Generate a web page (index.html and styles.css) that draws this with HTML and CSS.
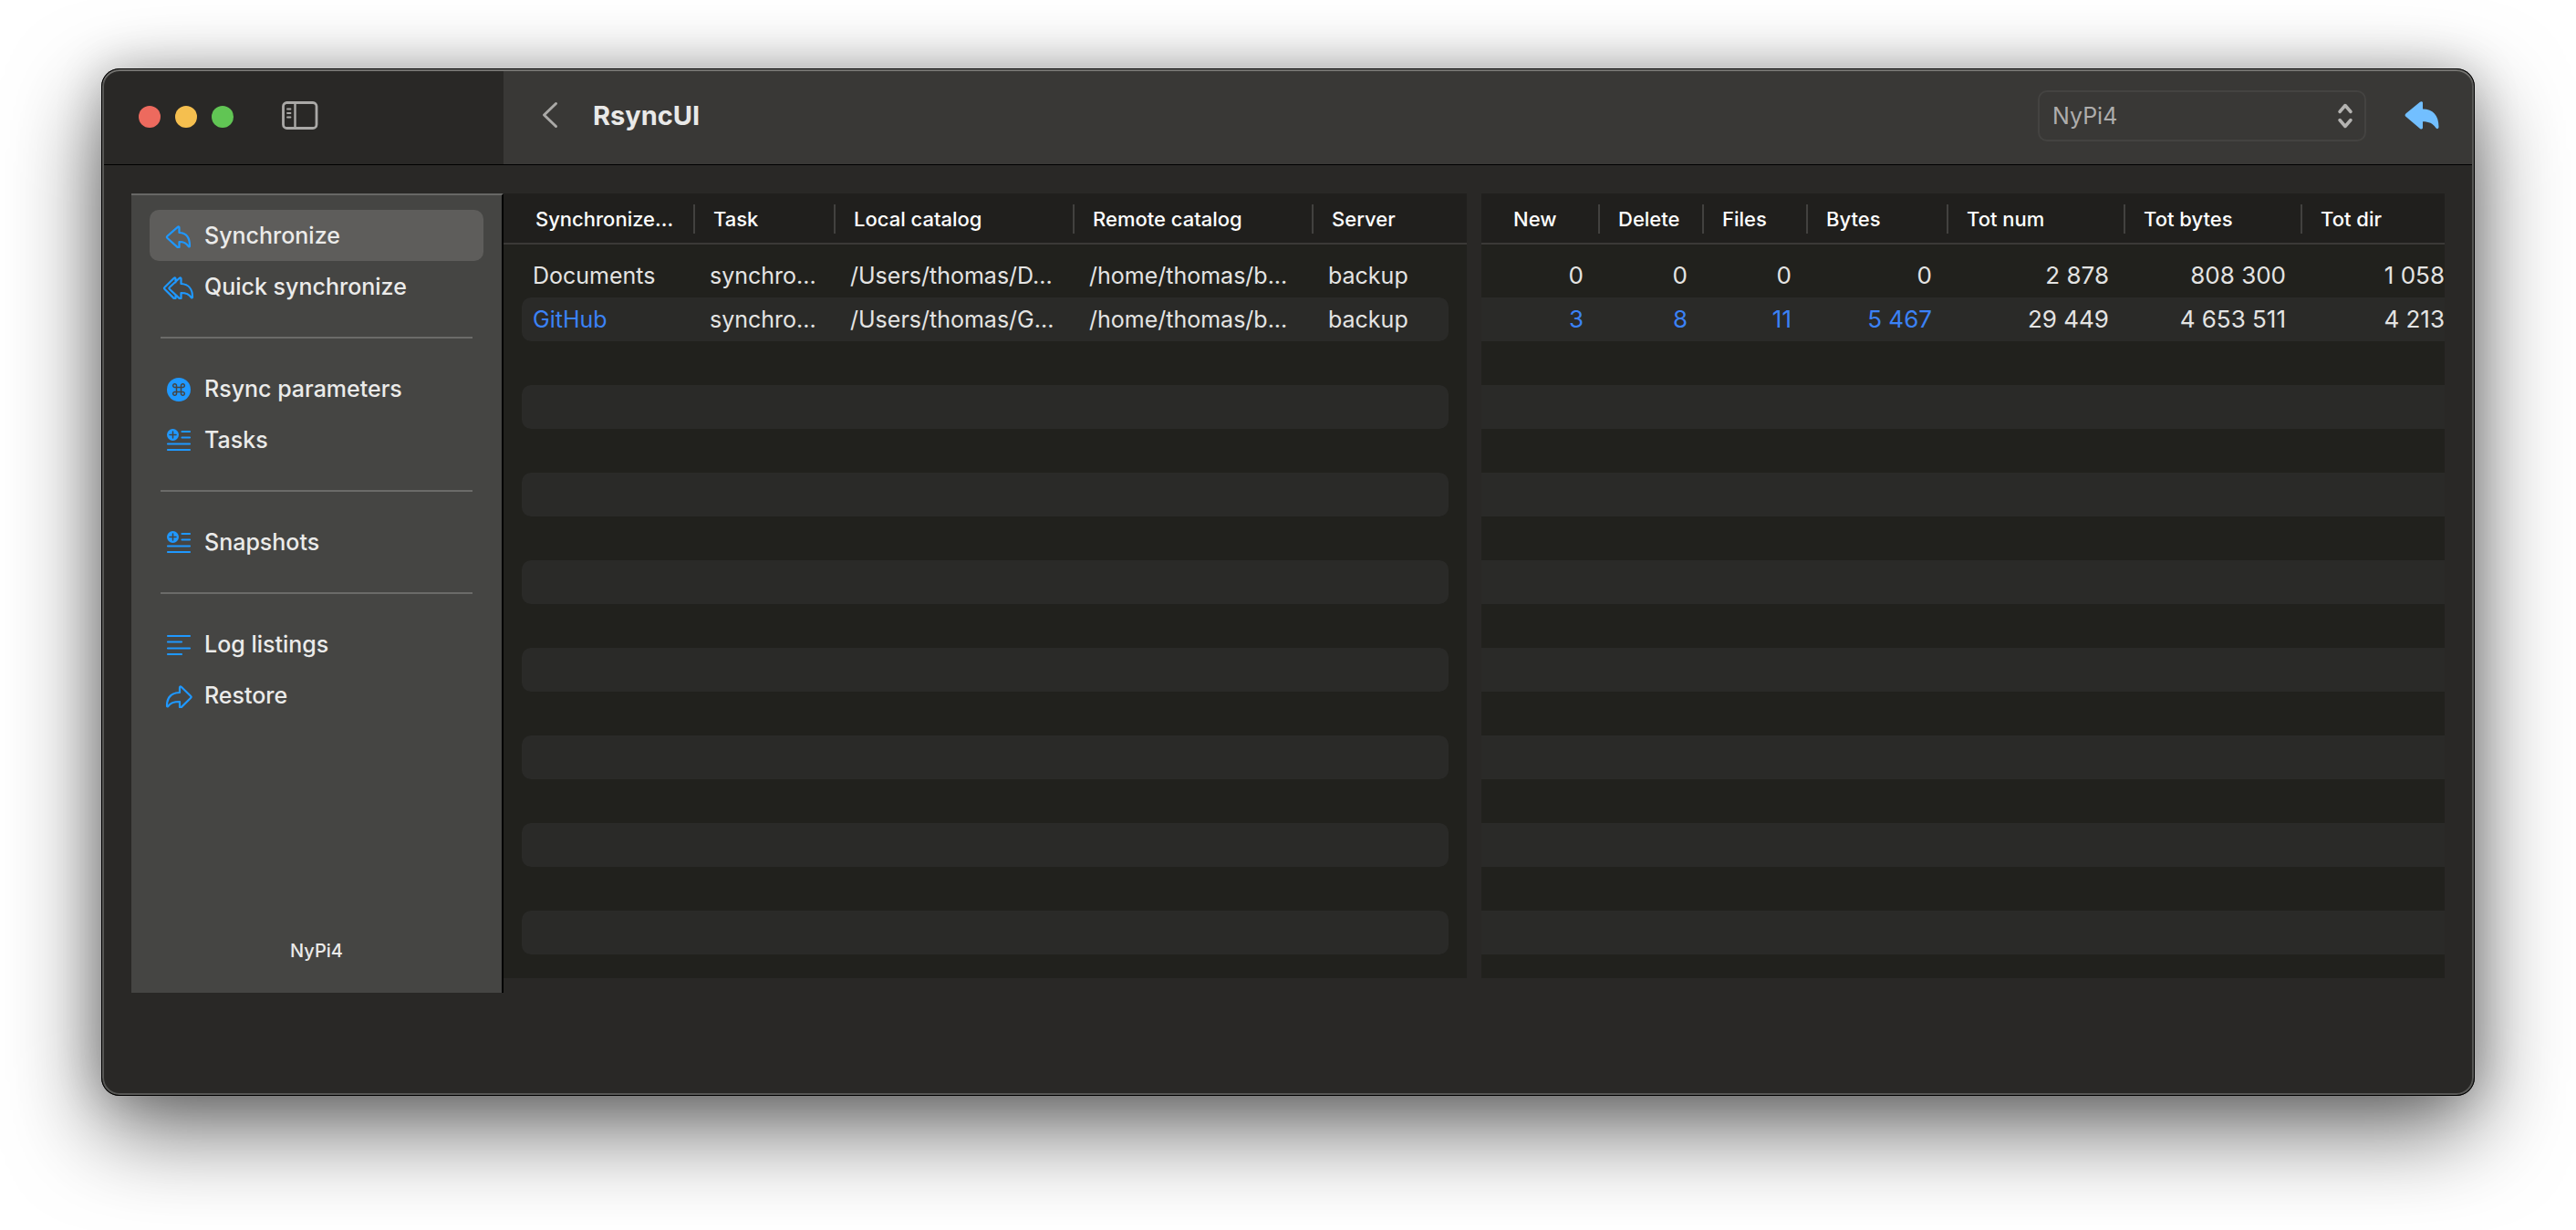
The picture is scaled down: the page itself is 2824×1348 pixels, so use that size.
FILE: index.html
```html
<!DOCTYPE html>
<html lang="en">
<head>
<meta charset="utf-8">
<meta name="viewport" content="width=device-width, initial-scale=1">
<title>RsyncUI</title>
<link rel="stylesheet" href="styles.css">
</head>
<body>
<svg class="defs" aria-hidden="true">
  <symbol id="reply" viewBox="-1 -2 36 28">
    <path d="M17.500 3.500v5.500c8.500.3 11.500 6.500 11.500 14.500 0 1.200-1 1.300-1.600.3C25.300 20.300 22.500 19 17.500 19v5.400c0 1.200-.8 1.500-1.700.7L4.500 15c-.9-.8-.9-1.500 0-2.300L15.800 2.800c.9-.8 1.700-.5 1.700.7z"/>
  </symbol>
  <symbol id="reply-all" viewBox="0 -2 36 28">
    <path d="M14.500 7.500V3.500c0-1.200-.8-1.500-1.700-.7L2.600 12.700c-.9.800-.9 1.500 0 2.300l10.200 10.100c.9.800 1.700.5 1.700-.7v-2.500M20.500 3.500v5.500c8.500.3 12.500 6.500 12.500 14.500 0 1.200-1 1.300-1.600.3C29.300 20.300 25.500 19 20.500 19v5.400c0 1.200-.8 1.500-1.700.7L8 15c-.9-.8-.9-1.500 0-2.300L18.800 2.800c.9-.8 1.700-.5 1.700.7z"/>
  </symbol>
  <symbol id="list-plus" viewBox="0 0 28 28">
    <circle cx="7.500" cy="8.500" r="6.500" fill="currentColor" stroke="none"/>
    <path d="M7.500 5v7M4 8.500h7" stroke="#454543" stroke-width="1.500"/>
    <path d="M17.500 5H26M17.500 11.500H26M2 18.500h24M2 25h24"/>
  </symbol>
</svg>

<div class="window">
  <header class="titlebar">
    <div class="titlebar-side">
      <div class="lights">
        <button class="light close" aria-label="Close"></button>
        <button class="light minimize" aria-label="Minimize"></button>
        <button class="light zoom" aria-label="Zoom"></button>
      </div>
      <button class="icon-button" aria-label="Toggle sidebar">
        <svg width="40" height="32" viewBox="0 0 40 32" fill="none" stroke="currentColor" stroke-width="2.800" stroke-linecap="round">
          <rect x="1.500" y="1.500" width="36.500" height="28" rx="4"/>
          <path d="M14.500 2v27" stroke-width="2.400"/>
          <path d="M6 8.500h3.500M6 13h3.500M6 17.500h3.500" stroke-width="1.800"/>
        </svg>
      </button>
    </div>
    <div class="toolbar">
      <button class="icon-button" aria-label="Back">
        <svg width="18" height="30" viewBox="0 0 18 30" fill="none" stroke="currentColor" stroke-width="3" stroke-linecap="round" stroke-linejoin="round"><path d="M15.500 2.500 2.500 15l13 12.500"/></svg>
      </button>
      <h1 class="title">RsyncUI</h1>
      <div class="picker">
        <select class="picker-select" aria-label="Profile"><option>NyPi4</option></select>
        <svg class="picker-arrows" width="18" height="28" viewBox="0 0 18 28" fill="none" stroke="currentColor" stroke-width="3.500" stroke-linecap="round" stroke-linejoin="round"><path d="m3 9.500 6-7 6 7M3 18.500l6 7 6-7"/></svg>
      </div>
      <button class="icon-button send" aria-label="Return">
        <svg width="38" height="32" viewBox="0 0 38 32" fill="currentColor"><path d="M20 2.600v6.900C31 9.700 37.500 16 37.500 29c0 2.200-2 3-3.300 1C31 25 27 23.300 20 23.200v6.900c0 1.500-1.700 2-3 .8L1.700 18c-1.500-1.200-1.500-2.400 0-3.700L17 1.800c1.300-1.200 3-.7 3 .8z"/></svg>
      </button>
    </div>
  </header>

  <main class="content">
    <nav class="sidebar" aria-label="Sections">
      <ul class="menu">
        <li><a class="item selected" href="#synchronize" aria-current="page"><svg class="glyph"><use href="#reply"/></svg>Synchronize</a></li>
        <li><a class="item" href="#quick"><svg class="glyph"><use href="#reply-all"/></svg>Quick synchronize</a></li>
      </ul>
      <hr class="divider">
      <ul class="menu">
        <li><a class="item" href="#parameters"><svg class="glyph" viewBox="0 0 28 28"><circle cx="14" cy="15" r="13" fill="currentColor" stroke="none"/><path d="M11.500 12.500h5v5h-5zM11.500 12.500H9.700a1.900 1.900 0 1 1 1.800-1.900zM16.500 12.500h1.800a1.900 1.900 0 1 0-1.800-1.900zM11.500 17.500H9.700a1.900 1.900 0 1 0 1.800 1.900zM16.500 17.500h1.800a1.900 1.900 0 1 1-1.800 1.900z" stroke="#454543" stroke-width="1.500"/></svg>Rsync parameters</a></li>
        <li><a class="item" href="#tasks"><svg class="glyph"><use href="#list-plus"/></svg>Tasks</a></li>
      </ul>
      <hr class="divider">
      <ul class="menu">
        <li><a class="item" href="#snapshots"><svg class="glyph"><use href="#list-plus"/></svg>Snapshots</a></li>
      </ul>
      <hr class="divider">
      <ul class="menu">
        <li><a class="item" href="#logs"><svg class="glyph" viewBox="0 0 28 28"><path d="M2 5h24M2 11.500h15M2 18.500h24M2 25h15"/></svg>Log listings</a></li>
        <li><a class="item" href="#restore"><svg class="glyph" viewBox="1 -2 36 28"><path d="M20 3.500v5.500C10 9.300 6 15.500 6 23.500c0 1.200 1 1.300 1.600.3C9.700 20.300 14 19 20 19v5.400c0 1.200.8 1.500 1.700.7L32 15c.9-.8.9-1.500 0-2.300L21.700 2.800c-.9-.8-1.700-.5-1.700.7z"/></svg>Restore</a></li>
      </ul>
      <p class="profile">NyPi4</p>
    </nav>

    <div class="panels">
      <section class="panel" aria-label="Tasks">
        <table class="grid rounded">
          <colgroup><col class="w210"><col class="w154"><col class="w262"><col class="w262"><col></colgroup>
          <thead><tr><th>Synchronize...</th><th>Task</th><th>Local catalog</th><th>Remote catalog</th><th>Server</th></tr></thead>
          <tbody>
            <tr><td>Documents</td><td>synchro...</td><td>/Users/thomas/D...</td><td>/home/thomas/b...</td><td>backup</td></tr>
            <tr><td class="changed">GitHub</td><td>synchro...</td><td>/Users/thomas/G...</td><td>/home/thomas/b...</td><td>backup</td></tr>
            <tr><td colspan="5"></td></tr>
            <tr><td colspan="5"></td></tr>
            <tr><td colspan="5"></td></tr>
            <tr><td colspan="5"></td></tr>
            <tr><td colspan="5"></td></tr>
            <tr><td colspan="5"></td></tr>
            <tr><td colspan="5"></td></tr>
            <tr><td colspan="5"></td></tr>
            <tr><td colspan="5"></td></tr>
            <tr><td colspan="5"></td></tr>
            <tr><td colspan="5"></td></tr>
            <tr><td colspan="5"></td></tr>
            <tr><td colspan="5"></td></tr>
            <tr><td colspan="5"></td></tr>
          </tbody>
        </table>
      </section>

      <section class="panel" aria-label="Estimates">
        <table class="grid numeric">
          <colgroup><col class="w130"><col class="w114"><col class="w114"><col class="w154"><col class="w194"><col class="w194"><col></colgroup>
          <thead><tr><th>New</th><th>Delete</th><th>Files</th><th>Bytes</th><th>Tot num</th><th>Tot bytes</th><th>Tot dir</th></tr></thead>
          <tbody>
            <tr><td>0</td><td>0</td><td>0</td><td>0</td><td>2 878</td><td>808 300</td><td>1 058</td></tr>
            <tr><td class="changed">3</td><td class="changed">8</td><td class="changed">11</td><td class="changed">5 467</td><td>29 449</td><td>4 653 511</td><td>4 213</td></tr>
            <tr><td colspan="7"></td></tr>
            <tr><td colspan="7"></td></tr>
            <tr><td colspan="7"></td></tr>
            <tr><td colspan="7"></td></tr>
            <tr><td colspan="7"></td></tr>
            <tr><td colspan="7"></td></tr>
            <tr><td colspan="7"></td></tr>
            <tr><td colspan="7"></td></tr>
            <tr><td colspan="7"></td></tr>
            <tr><td colspan="7"></td></tr>
            <tr><td colspan="7"></td></tr>
            <tr><td colspan="7"></td></tr>
            <tr><td colspan="7"></td></tr>
            <tr><td colspan="7"></td></tr>
          </tbody>
        </table>
      </section>
    </div>
  </main>
</div>
</body>
</html>
```
FILE: styles.css
```css
* { box-sizing: border-box; }

body {
  margin: 0;
  padding: 75px 111px 147px;
  background: #fff;
  color: #e4e4e3;
  font: 25px/32px Inter, "Liberation Sans", sans-serif;
}

.defs { display: none; }

.window {
  position: relative;
  padding: 1px;
  border-radius: 20px;
  background: #292826;
  box-shadow: 0 36px 100px rgba(0, 0, 0, .6), 0 0 50px rgba(0, 0, 0, .2);
}

/* hairline and inner highlight around the window */
.window::after {
  content: "";
  position: absolute;
  inset: 0;
  border: 1px solid #000;
  border-radius: 20px;
  box-shadow: inset 0 2px 0 #73726f, inset 0 0 0 2px #575755;
  pointer-events: none;
}

.titlebar {
  display: grid;
  grid-template-columns: 440px 1fr;
  height: 105px;
  border-bottom: 1px solid #000;
}

.titlebar-side {
  display: flex;
  align-items: center;
  gap: 53px;
  padding-left: 40px;
}

.lights { display: flex; gap: 16px; }

.light {
  width: 24px;
  height: 24px;
  padding: 0;
  border: 0;
  border-radius: 50%;
}

.close { background: #ed6a5e; }
.minimize { background: #f5bf4f; }
.zoom { background: #61c554; }

.icon-button {
  display: flex;
  padding: 0 0 2px;
  border: 0;
  background: none;
  color: #aaa9a7;
}

.toolbar {
  display: flex;
  align-items: center;
  padding: 0 38px 2px 42px;
  border-top-right-radius: 19px;
  background: #393836;
}

.title {
  margin: 0 auto 0 38px;
  color: #e9e9e8;
  font-size: 29px;
  font-weight: 700;
}

.picker { display: grid; width: 360px; align-items: center; }

.picker-select {
  grid-area: 1 / 1;
  height: 56px;
  padding: 0 14px;
  border: 2px solid #444341;
  border-radius: 10px;
  appearance: none;
  background: none;
  color: #aeadac;
  font: inherit;
}

.picker-arrows {
  grid-area: 1 / 1;
  justify-self: end;
  margin-right: 14px;
  color: #b4b3b1;
  pointer-events: none;
}

.send { margin-left: 42px; color: #72bfff; }

.content {
  display: grid;
  grid-template-columns: 408px 1fr;
  padding: 31px 32px 112px;
}

.sidebar {
  display: flex;
  flex-direction: column;
  padding: 16px 20px 30px;
  border-top: 2px solid #676765;
  border-right: 2px solid #000;
  background: #454543;
}

.menu { margin: 0; padding: 0; list-style: none; }

.item {
  display: flex;
  align-items: center;
  gap: 10px;
  height: 56px;
  padding-left: 14px;
  border-radius: 10px;
  color: #ebebea;
  font-weight: 500;
  text-decoration: none;
}

.selected { background: #5e5d5b; }

.glyph {
  width: 36px;
  height: 28px;
  color: #1f98ff;
  fill: none;
  stroke: currentColor;
  stroke-width: 2.2;
  stroke-linecap: round;
  stroke-linejoin: round;
}

.divider {
  width: calc(100% - 24px);
  height: 2px;
  margin: 27px auto;
  border: 0;
  background: #6b6b69;
}

.profile {
  margin: auto 0 0;
  font-size: 20px;
  font-weight: 500;
  text-align: center;
  color: #ebebea;
}

.panels {
  display: grid;
  grid-template-columns: 1fr 1fr;
  gap: 16px;
  padding-bottom: 16px;
}

.panel {
  min-width: 0;
  padding-bottom: 26px;
  overflow: hidden;
  background: #21211d;
}

.grid {
  width: 100%;
  border-collapse: separate;
  border-spacing: 0;
  table-layout: fixed;
}

.w114 { width: 114px; }
.w130 { width: 130px; }
.w154 { width: 154px; }
.w194 { width: 194px; }
.w210 { width: 210px; }
.w262 { width: 262px; }

.grid th {
  height: 56px;
  padding: 2px 0 0 20px;
  border-bottom: 2px solid #3b3937;
  background: #201f1d linear-gradient(#42413f, #42413f) no-repeat right 0 top 12px / 2px 32px;
  color: #fff;
  font-size: 22px;
  font-weight: 500;
  text-align: left;
  white-space: nowrap;
}

.grid th:first-child { padding-left: 35px; }
.grid th:last-child { background-image: none; }

.grid tbody::before {
  content: "";
  display: table-row;
  height: 10px;
}

.grid td {
  height: 48px;
  padding: 0 0 0 16px;
  white-space: nowrap;
}

.grid tr:nth-child(even) td { background-color: #2a2a28; }

/* striped rows stop short of the panel's edges and have round ends */
.rounded td { background-clip: padding-box; }

.rounded td:first-child {
  padding-left: 12px;
  border-left: 20px solid transparent;
  border-top-left-radius: 30px 10px;
  border-bottom-left-radius: 30px 10px;
}

.rounded td:last-child {
  border-right: 20px solid transparent;
  border-top-right-radius: 30px 10px;
  border-bottom-right-radius: 30px 10px;
}

.numeric td { padding: 0 18px 0 0; font-size: 26px; text-align: right; }
.numeric td:last-child { padding-right: 0; }

.grid .changed { color: #3b82f7; }
```
